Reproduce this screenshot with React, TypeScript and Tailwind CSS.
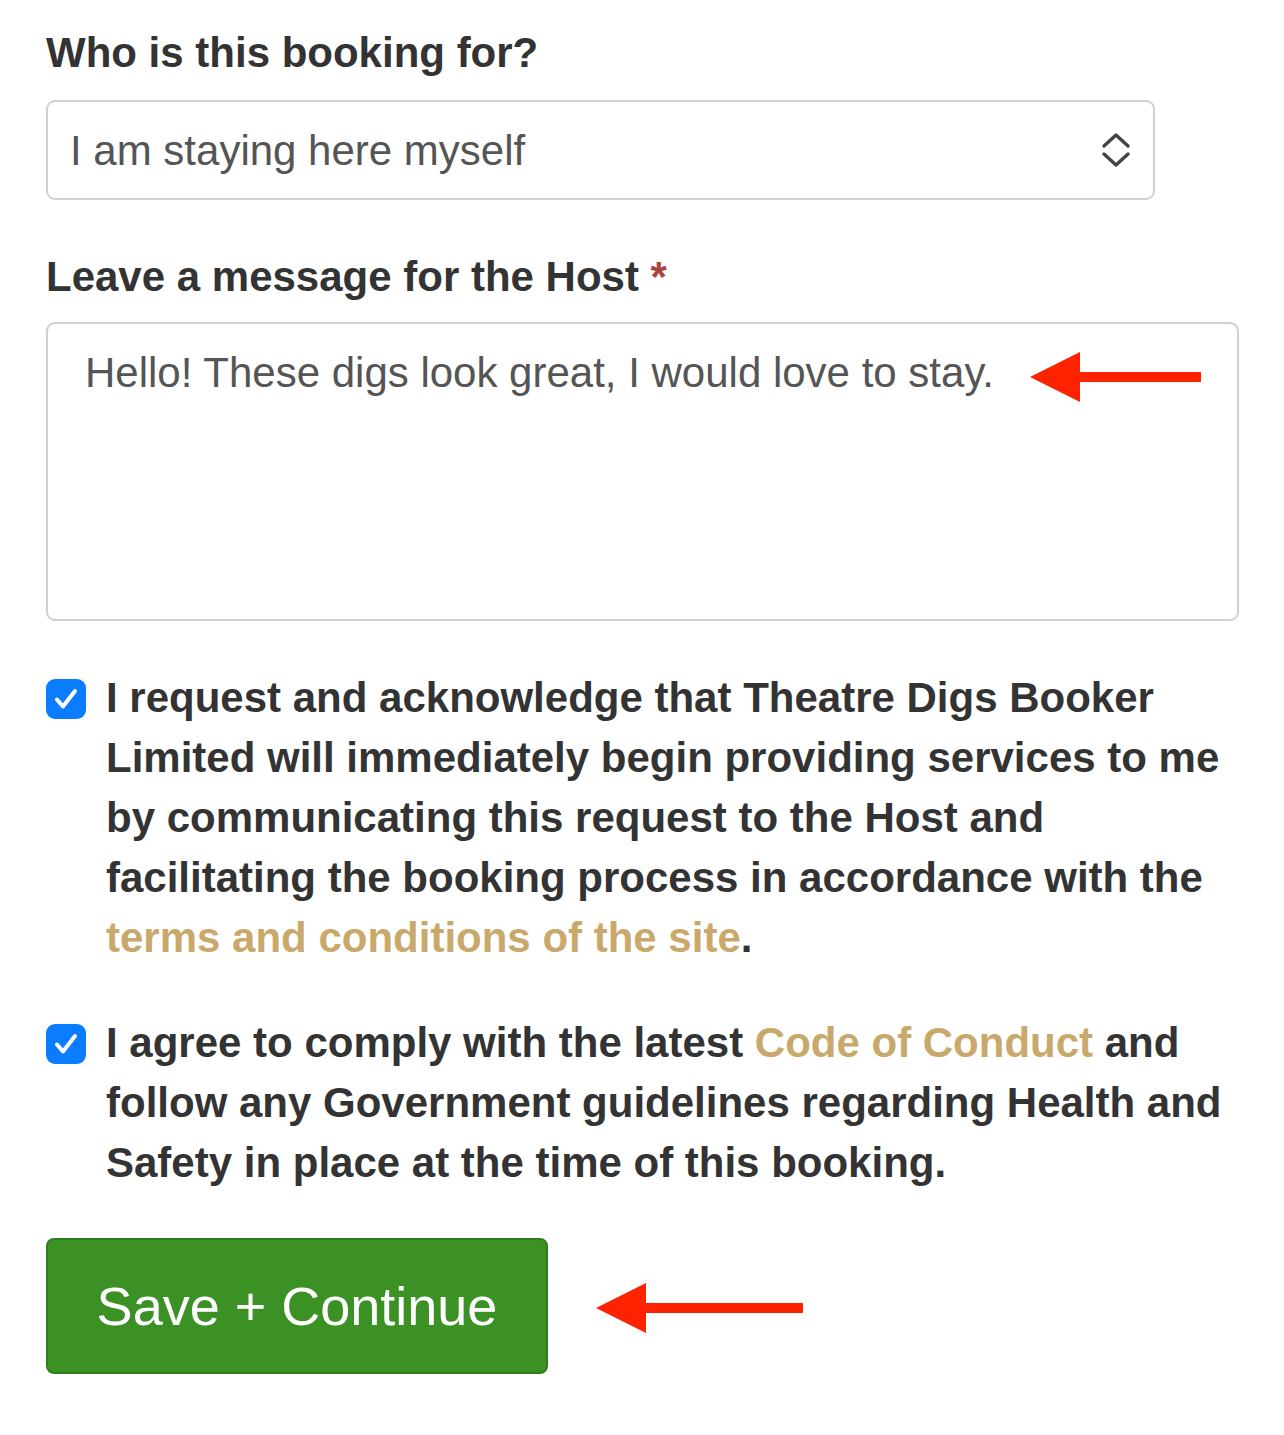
function LeftArrow({ className, shaft = 123 }: { className?: string; shaft?: number }) {
  const w = 49 + shaft
  return (
    <svg className={className} width={w} height="52" viewBox={`0 0 ${w} 52`} fill="none">
      <polygon points="0,26 50,1 50,51" fill="#ff2200" />
      <rect x="48" y="21" width={shaft} height="10" fill="#ff2200" />
    </svg>
  )
}

function Tick() {
  return (
    <span className="mt-[11px] flex h-[40px] w-[40px] shrink-0 items-center justify-center rounded-[9px] bg-[#0a7cff]">
      <svg width="28" height="28" viewBox="0 0 28 28" fill="none" stroke="white" strokeWidth="4" strokeLinecap="round" strokeLinejoin="round">
        <polyline points="5,14.5 11,21.5 23,6" />
      </svg>
    </span>
  )
}

export default function App() {
  return (
    <div className="min-h-screen bg-white pl-[46px] pt-[23px] font-['Liberation_Sans',Arial,sans-serif] text-[#333]">
      {/* Booking for */}
      <label className="block text-[42px] leading-[60px] font-bold">Who is this booking for?</label>
      <div className="mt-[17px] flex h-[100px] w-[1109px] items-center rounded-[9px] border-2 border-[#d0d0d0] pl-[22px] pr-[22px] text-[42px] text-[#555]">
        <span>I am staying here myself</span>
        <svg className="ml-auto" width="30" height="36" viewBox="0 0 30 36" fill="none" stroke="#444" strokeWidth="3.4" strokeLinecap="round" strokeLinejoin="round">
          <polyline points="3,14 15,3 27,14" />
          <polyline points="3,22 15,33 27,22" />
        </svg>
      </div>

      {/* Message */}
      <label className="mt-[47px] block text-[42px] leading-[60px] font-bold">
        Leave a message for the Host <span className="text-[#a94442]">*</span>
      </label>
      <div className="relative mt-[15px] h-[299px] w-[1193px] rounded-[9px] border-2 border-[#d0d0d0] pl-[37px] pt-[19px] text-[42px] leading-[60px] text-[#555]">
        Hello! These digs look great, I would love to stay.
        <LeftArrow className="absolute left-[982px] top-[27px]" />
      </div>

      {/* Agreements */}
      <div className="mt-[47px] flex gap-[20px] pr-[30px]">
        <Tick />
        <p className="text-[42px] leading-[60px] font-bold">
          I request and acknowledge that Theatre Digs Booker Limited will immediately begin providing services to me by communicating this request to the Host and facilitating the booking process in accordance with the{' '}
          <a href="#" className="text-[#c8a96b]">terms and conditions of the site</a>.
        </p>
      </div>

      <div className="mt-[45px] flex gap-[20px] pr-[30px]">
        <Tick />
        <p className="text-[42px] leading-[60px] font-bold">
          I agree to comply with the latest <a href="#" className="text-[#c8a96b]">Code of Conduct</a> and follow any Government guidelines regarding Health and Safety in place at the time of this booking.
        </p>
      </div>

      <div className="mt-[45px] flex items-center gap-[48px] pb-[60px]">
        <button className="h-[136px] w-[502px] rounded-[8px] border-2 border-[#2f7d1c] bg-[#3b9124] text-[54px] text-white">
          Save + Continue
        </button>
        <LeftArrow shaft={159} className="mt-[4px]" />
      </div>
    </div>
  )
}
